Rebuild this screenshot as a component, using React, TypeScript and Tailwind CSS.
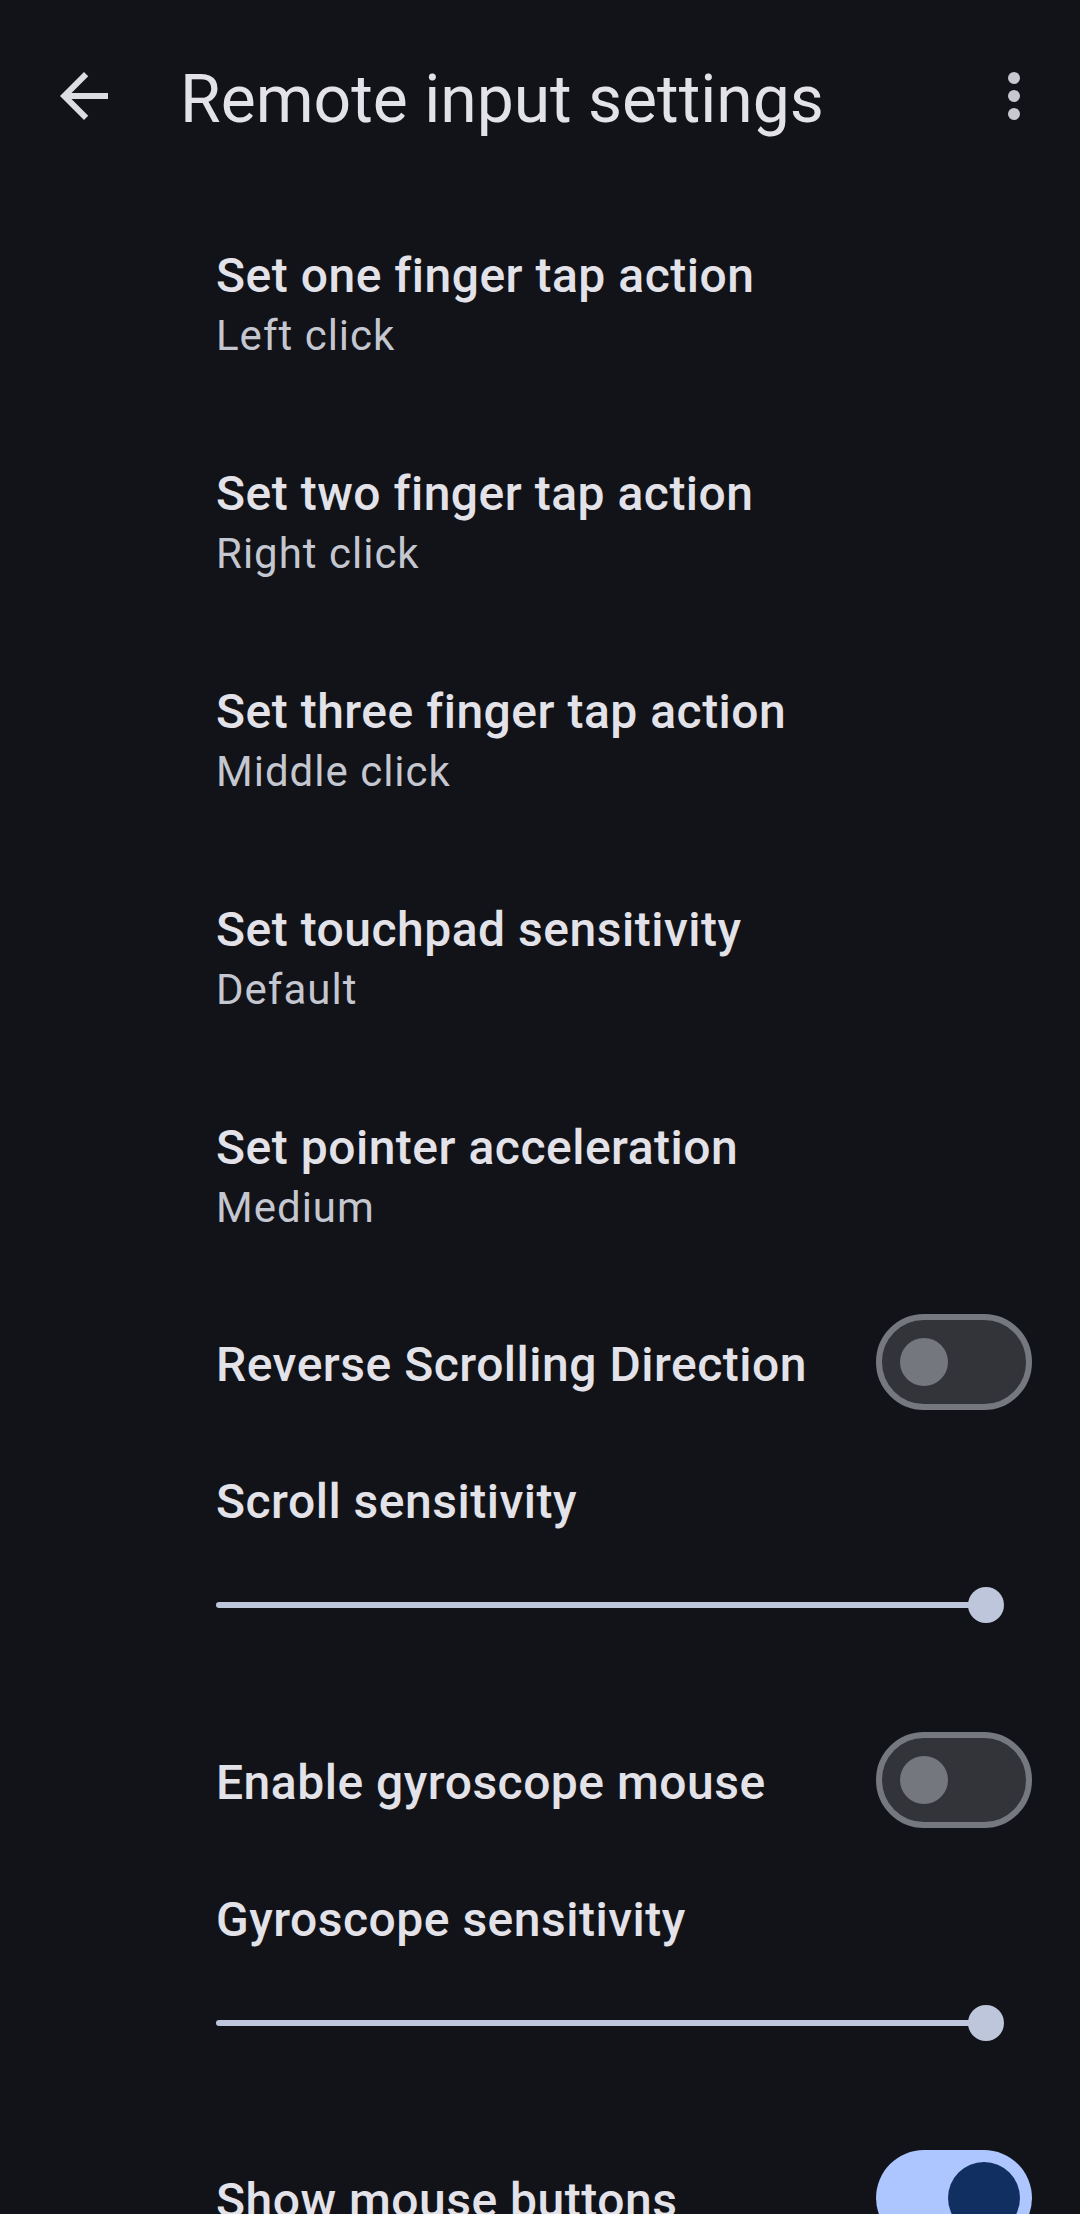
import React from "react";

const items = [
  { title: "Set one finger tap action", sub: "Left click" },
  { title: "Set two finger tap action", sub: "Right click" },
  { title: "Set three finger tap action", sub: "Middle click" },
  { title: "Set touchpad sensitivity", sub: "Default" },
  { title: "Set pointer acceleration", sub: "Medium" },
];

function Switch({ on }: { on: boolean }) {
  if (on) {
    return (
      <div className="relative w-[156px] h-[96px] shrink-0 rounded-full bg-[#adc6ff]">
        <div className="absolute right-[12px] top-[12px] w-[72px] h-[72px] rounded-full bg-[#112f60]" />
      </div>
    );
  }
  return (
    <div className="relative w-[156px] h-[96px] shrink-0 rounded-full bg-[#323439] border-[6px] border-[#76787f]">
      <div className="absolute left-[18px] top-[18px] w-[48px] h-[48px] rounded-full bg-[#75777e]" />
    </div>
  );
}

function SwitchRow({ label, on }: { label: string; on: boolean }) {
  return (
    <div className="flex items-center h-[160px] pl-[216px] pr-[48px]">
      <div className="flex-1 mt-[5px] text-[48px] leading-[64px] font-medium tracking-[0.5px] text-[#e3e2e9]">{label}</div>
      <Switch on={on} />
    </div>
  );
}

function SliderPref({ label }: { label: string }) {
  return (
    <div className="pt-[28px] pb-[71px] pl-[214px] pr-[76px]">
      <div className="pl-[2px] text-[48px] leading-[64px] font-medium tracking-[0.5px] text-[#e3e2e9]">{label}</div>
      <div className="relative mt-[47px] h-[48px] flex items-center">
        <div className="ml-[2px] mr-[18px] flex-1 h-[6px] rounded-full bg-[#bec6dc]" />
        <div className="absolute right-0 top-[6px] w-[36px] h-[36px] rounded-full bg-[#bec6dc]" />
      </div>
    </div>
  );
}

export default function App() {
  return (
    <div className="w-[1080px] h-[2214px] overflow-hidden bg-[#111318] font-[Roboto,sans-serif] text-[#e3e2e9]">
      <header className="flex items-center h-[192px] pl-[48px] pr-[30px]">
        <div className="w-[72px] h-[72px] flex items-center justify-center">
          <svg viewBox="0 0 24 24" className="w-[72px] h-[72px]" fill="#dcdde3">
            <path d="M20 11H7.83l5.59-5.59L12 4l-8 8 8 8 1.41-1.41L7.83 13H20v-2z" />
          </svg>
        </div>
        <h1 className="ml-[60px] mt-[8px] flex-1 text-[66px] leading-[80px] font-normal text-[#e3e2e9]">
          Remote input settings
        </h1>
        <div className="w-[72px] h-[72px] flex items-center justify-center">
          <svg viewBox="0 0 24 24" className="w-[72px] h-[72px]" fill="#c8c9d0">
            <circle cx="12" cy="6" r="2" />
            <circle cx="12" cy="12" r="2" />
            <circle cx="12" cy="18" r="2" />
          </svg>
        </div>
      </header>
      <div>
        {items.map((it) => (
          <div key={it.title} className="pl-[216px] pr-[48px] pt-[52px] pb-[46px]">
            <div className="text-[48px] leading-[64px] font-medium tracking-[0.5px] text-[#e3e2e9]">{it.title}</div>
            <div className="text-[42px] leading-[56px] tracking-[1px] text-[#c4c6d0]">{it.sub}</div>
          </div>
        ))}
        <SwitchRow label="Reverse Scrolling Direction" on={false} />
        <SliderPref label="Scroll sensitivity" />
        <SwitchRow label="Enable gyroscope mouse" on={false} />
        <SliderPref label="Gyroscope sensitivity" />
        <SwitchRow label="Show mouse buttons" on={true} />
      </div>
    </div>
  );
}
